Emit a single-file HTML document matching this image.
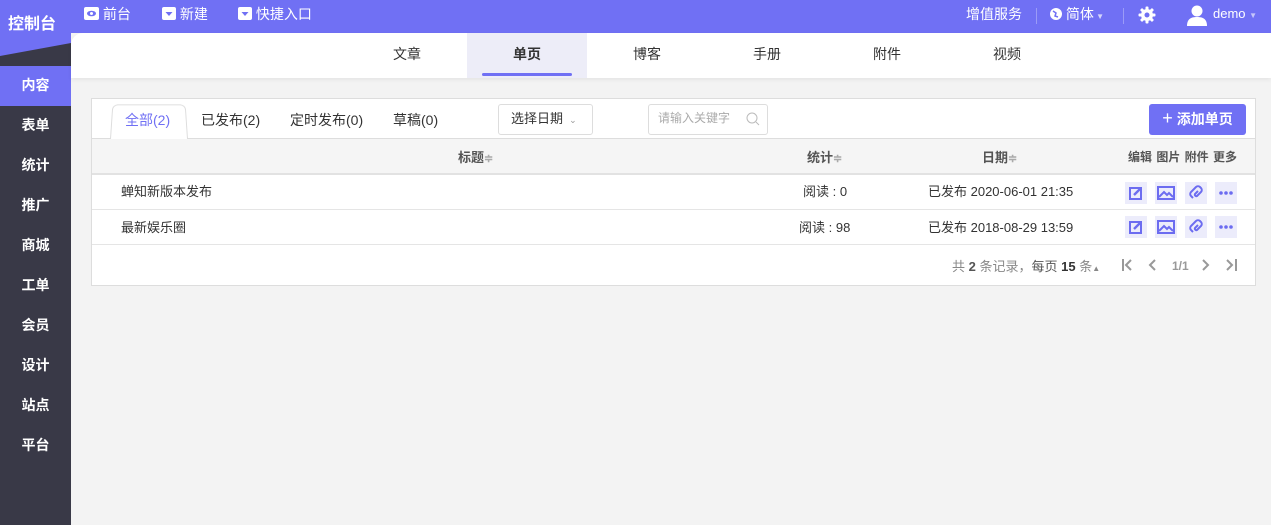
<!DOCTYPE html><html><head><meta charset="utf-8"><style>
*{margin:0;padding:0;box-sizing:border-box}
body{width:1271px;height:525px;overflow:hidden;background:#f3f3f3;font-family:"Liberation Sans","Noto Sans CJK SC",sans-serif;font-size:13px;color:#333;position:relative}
.top{position:absolute;left:0;top:0;width:1271px;height:33px;background:#7070f4;color:#fff;font-size:14px}
.top span{position:absolute;top:4px;white-space:nowrap}
.side{position:absolute;left:0;top:0;width:71px;height:525px;background:#393947}
.logo{position:absolute;left:0;top:0;width:71px;height:66px;background:#393947;overflow:hidden}
.logo .p{position:absolute;left:0;top:0;width:71px;height:66px;background:#7070f4;clip-path:polygon(0 0,100% 0,100% 43px,0 56px)}
.logo b{position:absolute;left:8px;top:10px;color:#fff;font-size:16px}
.side .it{position:absolute;left:0;width:71px;height:40px;line-height:38px;text-align:center;color:#fff;font-size:14px;font-weight:bold}
.sub{position:absolute;left:71px;top:33px;width:1200px;height:45px;background:#fff;border-top-left-radius:12px;box-shadow:0 2px 4px rgba(0,0,0,.06)}
.sub div{position:absolute;top:0;width:120px;height:45px;line-height:42px;text-align:center;font-size:14px}
.panel{position:absolute;left:91px;top:98px;width:1165px;height:188px;background:#fff;border:1px solid #ddd}
.abs{position:absolute;white-space:nowrap}
</style></head><body>
<div class="top">
<span style="left:84px"><svg width="15" height="13" style="vertical-align:-1px"><rect width="15" height="13" rx="2" fill="#fff"/><ellipse cx="7.5" cy="6.5" rx="4.5" ry="2.8" fill="#7070f4"/><circle cx="7.5" cy="6.5" r="1.5" fill="#fff"/></svg> 前台</span>
<span style="left:162px"><svg width="14" height="13" style="vertical-align:-1px"><rect width="14" height="13" rx="2" fill="#fff"/><path d="M3.5 5h7l-3.5 4z" fill="#7070f4"/></svg> 新建</span>
<span style="left:238px"><svg width="14" height="13" style="vertical-align:-1px"><rect width="14" height="13" rx="2" fill="#fff"/><path d="M3.5 5h7l-3.5 4z" fill="#7070f4"/></svg> 快捷入口</span>
<span style="left:966px">增值服务</span>
<span style="left:1036px;top:8px;width:1px;height:16px;background:rgba(255,255,255,.3)"></span>
<span style="left:1050px"><svg width="12" height="12" style="vertical-align:-1px"><circle cx="6" cy="6" r="6" fill="#fff"/><path d="M3 3l3 2-1 3 3 1" stroke="#7070f4" stroke-width="1.5" fill="none"/></svg> 简体<small style="font-size:8px;opacity:.7"> ▼</small></span>
<span style="left:1123px;top:8px;width:1px;height:16px;background:rgba(255,255,255,.3)"></span>
<span style="left:1138px;top:6px"><svg width="18" height="18" viewBox="0 0 18 18"><g fill="#fff"><circle cx="9" cy="9" r="6"/><rect x="7.5" y="0.5" width="3" height="17" rx="1"/><rect x="7.5" y="0.5" width="3" height="17" rx="1" transform="rotate(45 9 9)"/><rect x="7.5" y="0.5" width="3" height="17" rx="1" transform="rotate(90 9 9)"/><rect x="7.5" y="0.5" width="3" height="17" rx="1" transform="rotate(135 9 9)"/></g><circle cx="9" cy="9" r="2.5" fill="#7070f4"/></svg></span>
<span style="left:1187px;top:4px"><svg width="20" height="22"><circle cx="10" cy="7" r="5.5" fill="#fff"/><path d="M0 22c0-7 4-9 10-9s10 2 10 9z" fill="#fff"/></svg></span>
<span style="left:1213px;top:6px;font-size:13px">demo <small style="font-size:8px;opacity:.6">▼</small></span>
</div>
<div class="side">
<div class="logo"><div class="p"></div><b>控制台</b></div>
<div class="it" style="top:66px;background:#7070f4">内容</div>
<div class="it" style="top:106px">表单</div><div class="it" style="top:146px">统计</div><div class="it" style="top:186px">推广</div><div class="it" style="top:226px">商城</div><div class="it" style="top:266px">工单</div><div class="it" style="top:306px">会员</div><div class="it" style="top:346px">设计</div><div class="it" style="top:386px">站点</div><div class="it" style="top:426px">平台</div>
</div>
<div class="sub">
<div style="left:276px">文章</div>
<div style="left:396px;background:#ededf8;font-weight:bold">单页<i style="position:absolute;left:15px;width:90px;bottom:2px;height:3px;background:#7070f4;border-radius:2px"></i></div>
<div style="left:516px">博客</div><div style="left:636px">手册</div><div style="left:756px">附件</div><div style="left:876px">视频</div>
</div>
<div class="panel">
<div class="abs" style="left:0;top:39px;width:1163px;height:1px;background:#ddd"></div>
<div class="abs" style="left:18px;top:3px;width:78px;height:37px;background:#fff;border:1px solid #ddd;border-bottom:none;border-radius:6px 6px 0 0;transform:perspective(60px) rotateX(6deg);transform-origin:bottom"></div>
<div class="abs" style="left:33px;top:11px;color:#7070f4;font-size:14px">全部(2)</div>
<div class="abs" style="left:109px;top:11px;font-size:14px">已发布(2)</div>
<div class="abs" style="left:198px;top:11px;font-size:14px">定时发布(0)</div>
<div class="abs" style="left:301px;top:11px;font-size:14px">草稿(0)</div>
<div class="abs" style="left:406px;top:5px;width:95px;height:31px;border:1px solid #ddd;border-radius:3px;line-height:27px;padding-left:12px">选择日期 <small style="font-size:9px;color:#999">&nbsp;⌄</small></div>
<div class="abs" style="left:556px;top:5px;width:120px;height:31px;border:1px solid #ddd;border-radius:3px;line-height:27px;padding-left:9px;color:#aaa;font-size:12px">请输入关键字<svg width="14" height="14" style="position:absolute;right:7px;top:7px"><circle cx="6" cy="6" r="5" stroke="#bbb" fill="none"/><path d="M10 10l3 3" stroke="#bbb"/></svg></div>
<div class="abs" style="left:1057px;top:5px;width:97px;height:31px;background:#7070f4;border-radius:3px;color:#fff;line-height:29px;text-align:center;font-size:14px;font-weight:bold"><span style="font-size:18px;font-weight:normal">+</span> 添加单页</div>
<div class="abs" style="left:0;top:40px;width:1163px;height:36px;background:#f5f5f5;border-bottom:2px solid #e2e2e2;font-weight:bold;color:#555">
<span class="abs" style="left:366px;top:8px">标题<small style="color:#aaa">≑</small></span>
<span class="abs" style="left:715px;top:8px">统计<small style="color:#aaa">≑</small></span>
<span class="abs" style="left:890px;top:8px">日期<small style="color:#aaa">≑</small></span>
<span class="abs" style="left:1036px;top:9px;font-size:12px;word-spacing:1px">编辑 图片 附件 更多</span>
</div>
<div class="abs" style="left:0;top:110px;width:1163px;height:1px;background:#e5e5e5"></div>
<div class="abs" style="left:0;top:145px;width:1163px;height:1px;background:#e5e5e5"></div>
<div class="abs" style="left:29px;top:82px">蝉知新版本发布</div><div class="abs" style="left:711px;top:82px">阅读 : 0</div><div class="abs" style="left:836px;top:82px">已发布 2020-06-01 21:35</div>
<div class="abs" style="left:29px;top:118px">最新娱乐圈</div><div class="abs" style="left:707px;top:118px">阅读 : 98</div><div class="abs" style="left:836px;top:118px">已发布 2018-08-29 13:59</div>
<div class="abs" style="left:860px;top:157px;color:#888">共 <b style="color:#555">2</b> 条记录，<span style="color:#555">每页</span> <b style="color:#333">15</b> 条<small style="font-size:8px">▲</small></div>
<svg class="abs" style="left:1028px;top:158px" width="130" height="16"><g stroke="#999" stroke-width="2" fill="none"><path d="M3 2v12M11 3l-5 5 5 5"/><path d="M35 3l-5 5 5 5"/><path d="M83 3l5 5-5 5"/><path d="M107 3l5 5-5 5M116 2v12"/></g><text x="52" y="13" font-size="12" font-weight="bold" fill="#999" font-family="Liberation Sans">1/1</text></svg>
</div>
<svg class="abs" style="left:1125px;top:182px" width="120" height="60">
<g transform="translate(0,0)"><rect width="22" height="22" fill="#ececfb"/><rect x="5" y="6" width="11" height="11" fill="none" stroke="#6c6cf0" stroke-width="2"/><path d="M9 13l7-7" stroke="#6c6cf0" stroke-width="2.4"/></g>
<g transform="translate(30,0)"><rect width="22" height="22" fill="#ececfb"/><rect x="3" y="5" width="16" height="12" fill="none" stroke="#6c6cf0" stroke-width="2"/><path d="M4 15l5-5 3 3 2-2 4 4" stroke="#6c6cf0" stroke-width="2" fill="none"/></g>
<g transform="translate(60,0)"><rect width="22" height="22" fill="#ececfb"/><path d="M8 16l-2-2a3 3 0 0 1 0-4l5-5a3 3 0 0 1 4 0l1 1a3 3 0 0 1 0 4l-4 4a1.5 1.5 0 0 1-2-2l3-3" stroke="#6c6cf0" stroke-width="2" fill="none"/></g>
<g transform="translate(90,0)"><rect width="22" height="22" fill="#ececfb"/><circle cx="6" cy="11" r="1.8" fill="#6c6cf0"/><circle cx="11" cy="11" r="1.8" fill="#6c6cf0"/><circle cx="16" cy="11" r="1.8" fill="#6c6cf0"/></g>
<g transform="translate(0,34)"><rect width="22" height="22" fill="#ececfb"/><rect x="5" y="6" width="11" height="11" fill="none" stroke="#6c6cf0" stroke-width="2"/><path d="M9 13l7-7" stroke="#6c6cf0" stroke-width="2.4"/></g>
<g transform="translate(30,34)"><rect width="22" height="22" fill="#ececfb"/><rect x="3" y="5" width="16" height="12" fill="none" stroke="#6c6cf0" stroke-width="2"/><path d="M4 15l5-5 3 3 2-2 4 4" stroke="#6c6cf0" stroke-width="2" fill="none"/></g>
<g transform="translate(60,34)"><rect width="22" height="22" fill="#ececfb"/><path d="M8 16l-2-2a3 3 0 0 1 0-4l5-5a3 3 0 0 1 4 0l1 1a3 3 0 0 1 0 4l-4 4a1.5 1.5 0 0 1-2-2l3-3" stroke="#6c6cf0" stroke-width="2" fill="none"/></g>
<g transform="translate(90,34)"><rect width="22" height="22" fill="#ececfb"/><circle cx="6" cy="11" r="1.8" fill="#6c6cf0"/><circle cx="11" cy="11" r="1.8" fill="#6c6cf0"/><circle cx="16" cy="11" r="1.8" fill="#6c6cf0"/></g>
</svg>
</body></html>
